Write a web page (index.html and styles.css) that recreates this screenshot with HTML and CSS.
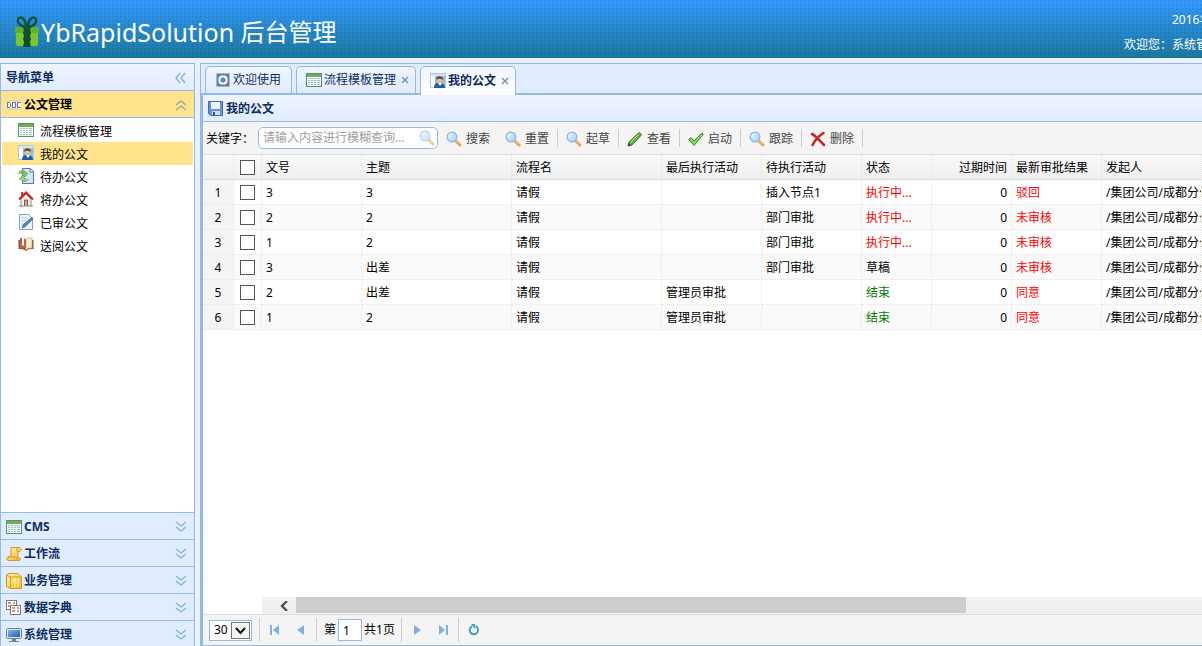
FILE: index.html
```html
<!DOCTYPE html>
<html lang="zh-CN">
<head>
<meta charset="utf-8">
<title>YbRapidSolution 后台管理</title>
<link rel="stylesheet" href="styles.css">
</head>
<body>
<svg class="defs" aria-hidden="true">
  <defs>
    <linearGradient id="lens" x1="0" y1="0" x2="1" y2="1"><stop offset="0" stop-color="#e8f6ff"/><stop offset="1" stop-color="#9fd0fa"/></linearGradient>
    <linearGradient id="gold" x1="0" y1="0" x2="1" y2="1"><stop offset="0" stop-color="#fff3a8"/><stop offset="1" stop-color="#f3b928"/></linearGradient>
    <linearGradient id="screen" x1="0" y1="0" x2="1" y2="1"><stop offset="0" stop-color="#7fb4ee"/><stop offset="1" stop-color="#2560b4"/></linearGradient>
  </defs>
  <symbol id="i-gift" viewBox="0 0 26 32">
    <rect x="2" y="12" width="22" height="18" rx="2" fill="#7cc62c"/>
    <rect x="1" y="11" width="24" height="6" rx="1" fill="#5fae2c"/>
    <path d="M9 11h8l-1 3 1 3-1 3 1 3-1 3 1 5H9l1-5-1-3 1-3-1-3 1-3z" fill="#0f4d34"/>
    <path d="M12 11C5 10 2 5 5 2c3-2 7 2 7 9zM14 11c7-1 10-6 7-9-3-2-7 2-7 9z" fill="none" stroke="#124f3c" stroke-width="2.4"/>
  </symbol>
  <symbol id="i-grid" viewBox="0 0 16 16">
    <rect x=".5" y="1.500" width="15" height="13" fill="#fff" stroke="#5f8f72"/>
    <path d="M1 2h14v3H1z" fill="#6fae58"/>
    <path d="M2 6h2v1H2zM5 6h2v1H5zM8 6h2v1H8zM11 6h3v1h-3zM2 8h2v1H2zM5 8h2v1H5zM8 8h2v1H8zM11 8h3v1h-3zM2 10h2v1H2zM5 10h2v1H5zM8 10h2v1H8zM11 10h3v1h-3zM2 12h2v1H2zM5 12h2v1H5zM8 12h2v1H8zM11 12h3v1h-3z" fill="#8fbfc8"/>
  </symbol>
  <symbol id="i-user" viewBox="0 0 16 16">
    <rect x=".5" y=".5" width="15" height="14" fill="#fff" stroke="#b4c8de"/>
    <path d="M1 1h14v2H1z" fill="#d5e5f6"/><path d="M5 3h10v11H5z" fill="#8bbbe8"/>
    <path d="M4 15c0-4 2-5 5-5s6 1 6 5z" fill="#245ba4"/><path d="M8 10l2 3 2-3z" fill="#fff"/>
    <circle cx="9.500" cy="7" r="3" fill="#eabc88"/><path d="M6 7c0-5 7-5 7 0-2-1-4-2-7 0z" fill="#6b4325"/>
  </symbol>
  <symbol id="i-pending" viewBox="0 0 16 16">
    <path d="M4.500 .5h8l3 3v12h-11z" fill="#d2e5fb" stroke="#4e79bb"/><path d="M12 1v3h3" fill="#fff" stroke="#4e79bb"/>
    <path d="M1 4c4-3 7-1 7 1h2l-3 4-4-4h2C5 4 3 4 1 6z" fill="#8cc060" stroke="#5f9440" stroke-width=".6"/>
    <path d="M10 12c-4 3-7 1-7-1H1l3-3 4 3H6c1 2 2 2 4 0z" fill="#a2cf72" stroke="#5f9440" stroke-width=".6"/>
  </symbol>
  <symbol id="i-home" viewBox="0 0 16 16">
    <path d="M3 8v7h10V8L8 3z" fill="#f5f2ee" stroke="#9a8e84"/><path d="M3 1h2v4H3z" fill="#d03c34"/>
    <path d="M1 8.500L8 1.500l7 7" fill="none" stroke="#c72c29" stroke-width="2.200"/><path d="M6.500 15V9h3v6" fill="#a4b6c6" stroke="#b24736"/>
    <path d="M1 15h3M12 15h3" stroke="#5ba13d"/>
  </symbol>
  <symbol id="i-edit" viewBox="0 0 16 16">
    <path d="M1.500 .5h9l4 4v11h-13z" fill="#edf5fd" stroke="#7c9fc4"/><path d="M3 4h6M3 7h6M3 10h4" stroke="#b7cce2"/>
    <path d="M14 3l1 2-8 8-3 1 1-3z" fill="#6186a8" stroke="#365877" stroke-width=".6"/>
  </symbol>
  <symbol id="i-book" viewBox="0 0 16 16">
    <path d="M.5 3v9c3 0 5 0 7.500 2 2.500-2 4.500-2 7.500-2V3H14v8H2V3z" fill="#8a5630"/>
    <path d="M2 1c3 0 5 0 6 2v10c-2-2-4-2-6-2z" fill="#c9574a"/><path d="M8 3c1-2 3-2 6-2v10c-2 0-4 0-6 2z" fill="#f7ead1" stroke="#b89b6e" stroke-width=".6"/>
    <path d="M4 1h2v8L5 8 4 9z" fill="#fff"/>
  </symbol>
  <symbol id="i-doc" viewBox="0 0 16 16">
    <path d="M1 3.500h13M1 12.500h13" stroke="#c3cff0"/>
    <g fill="#fff" stroke="#5872bd"><path d="M1.500 5.500h2l1 1v3l-1 1h-2zM6.500 5.500h3v5h-3zM14.500 5.500h-3v5h3"/></g>
  </symbol>
  <symbol id="i-scroll" viewBox="0 0 16 16">
    <path d="M5 1.500h8c3 0 3 4 0 4h-1v6c3 0 3 3 1 3H3c-3 0-3-3-1-3.500 2-.5 3-1 3-3z" fill="url(#gold)" stroke="#cf9a2e"/>
    <path d="M12 5.500c-2 0-2-3 0-3M2 11h8c2 1 1 3 0 3.500" fill="none" stroke="#cf9a2e"/>
  </symbol>
  <symbol id="i-box" viewBox="0 0 16 16">
    <path d="M.5 2L2 .5h10L15.500 4v11.500h-11l-4-2z" fill="url(#gold)" stroke="#d09a1c"/><path d="M1 2l3 2h11M4.500 4v11" fill="none" stroke="#d09a1c"/><path d="M9 5v9M12 5v9" stroke="#fff3ac"/>
  </symbol>
  <symbol id="i-dict" viewBox="0 0 16 16">
    <rect x=".5" y=".5" width="10" height="9" fill="#fff" stroke="#8c7474"/><rect x="4.500" y="5.500" width="10" height="9" fill="#fff" stroke="#8c7474"/>
    <path d="M2 3h3M7 3h2M2 6h2M6 8h3M11 8h2M6 11h3M11 11h2" stroke="#b87272" stroke-width="1.400"/>
  </symbol>
  <symbol id="i-monitor" viewBox="0 0 16 16">
    <rect x=".5" y="1.500" width="15" height="10" rx="1" fill="#dfe5ed" stroke="#6b7f97"/><path d="M2 3h12v7H2z" fill="url(#screen)"/>
    <path d="M6 12h4v2h3v1H3v-1h3z" fill="#71849b"/>
  </symbol>
  <symbol id="i-gear" viewBox="0 0 16 16">
    <rect x="2.500" y="2.500" width="11" height="11" fill="#f2f7fc" stroke="#5f7fa6" stroke-width="2"/>
    <path d="M3 3h3L3 6zM13 3v3l-3-3zM3 13v-3l3 3zM13 13h-3l3-3z" fill="#5f7fa6"/>
    <circle cx="8" cy="8" r="2" fill="#6d93c4" stroke="#43648f"/>
  </symbol>
  <symbol id="i-save" viewBox="0 0 16 16">
    <path d="M.5 .5h14v14h-12l-2-2z" fill="#6a90dc" stroke="#4469b6"/><path d="M3 1h9v7H3z" fill="#edf4ff"/><path d="M4 10h8v4H4z" fill="#d3dbe8"/><path d="M5 11h2v3H5z" fill="#33528f"/>
  </symbol>
  <symbol id="i-search" viewBox="0 0 16 16">
    <path d="M9.500 9.500l4.500 4.500" stroke="#e0a050" stroke-width="3" stroke-linecap="round"/><path d="M10 9.500l4 4" stroke="#ffd28c"/>
    <circle cx="6" cy="6" r="4.800" fill="url(#lens)" stroke="#8fb8e6" stroke-width="1.400"/><path d="M3 6c0-2 1-3 3-3" fill="none" stroke="#fff"/>
  </symbol>
  <symbol id="i-pencil" viewBox="0 0 16 16">
    <path d="M1 15l1-4L11.500 2c1-1 3.500 1 2.500 2.500L5 14z" fill="#63b748" stroke="#317923"/><path d="M3.500 11.500l8-8" stroke="#b6e696"/><path d="M1 15l1-3 2 2z" fill="#333"/>
  </symbol>
  <symbol id="i-check" viewBox="0 0 16 16"><path d="M.7 8.500L3 6.500l3 3.500L14 2l1.300 1.500L6 14.500z" fill="#80d95d" stroke="#329228"/></symbol>
  <symbol id="i-delete" viewBox="0 0 16 16"><path d="M2 3C6 5 10 10 14 14M13.500 2C9 5 5 9 2.500 14" fill="none" stroke="#c22a2a" stroke-width="2.600" stroke-linecap="round"/></symbol>
  <symbol id="i-up" viewBox="0 0 12 12"><path d="M1 6l5-4 5 4M1 11l5-4 5 4" fill="none" stroke="currentColor" stroke-width="1.300"/></symbol>
  <symbol id="i-down" viewBox="0 0 12 12"><path d="M1 1l5 4 5-4M1 6l5 4 5-4" fill="none" stroke="currentColor" stroke-width="1.300"/></symbol>
  <symbol id="i-left" viewBox="0 0 12 12"><path d="M5 1L1 6l4 5M10 1L6 6l4 5" fill="none" stroke="currentColor" stroke-width="1.300"/></symbol>
  <symbol id="i-close" viewBox="0 0 8 8"><path d="M1 1l6 6M7 1L1 7" stroke="currentColor" stroke-width="1.400"/></symbol>
  <symbol id="i-first" viewBox="0 0 12 12"><path d="M1 1h2v10H1zM10 1v10L4 6z" fill="currentColor"/></symbol>
  <symbol id="i-prev" viewBox="0 0 12 12"><path d="M9 1v10L2 6z" fill="currentColor"/></symbol>
  <symbol id="i-next" viewBox="0 0 12 12"><path d="M3 1v10l7-5z" fill="currentColor"/></symbol>
  <symbol id="i-last" viewBox="0 0 12 12"><path d="M9 1h2v10H9zM2 1v10l6-5z" fill="currentColor"/></symbol>
  <symbol id="i-refresh" viewBox="0 0 12 12"><path d="M7.500 2.200A4.200 4.200 0 1 1 4 2.300" fill="none" stroke="#479fc6" stroke-width="2"/><path d="M3 0h4v5z" fill="#479fc6"/></symbol>
</svg>

<header class="banner">
  <h1 class="brand"><svg class="brand-logo"><use href="#i-gift"/></svg>YbRapidSolution&nbsp;<span class="brand-sub">后台管理</span></h1>
  <div class="session">
    <span class="session-date">2016年</span>
    <span>欢迎您<span class="colon">：</span>系统管理员</span>
  </div>
</header>

<div class="workspace">
  <nav class="sidebar" aria-label="导航菜单">
    <div class="side-title">导航菜单<button class="fold" aria-label="折叠"><svg class="tool"><use href="#i-left"/></svg></button></div>
    <button class="group group-open"><svg class="icon"><use href="#i-doc"/></svg>公文管理<svg class="tool"><use href="#i-up"/></svg></button>
    <ul class="tree">
      <li><a class="node" href="#"><svg class="icon"><use href="#i-grid"/></svg><span>流程模板管理</span></a></li>
      <li><a class="node node-current" href="#"><svg class="icon"><use href="#i-user"/></svg><span>我的公文</span></a></li>
      <li><a class="node" href="#"><svg class="icon"><use href="#i-pending"/></svg><span>待办公文</span></a></li>
      <li><a class="node" href="#"><svg class="icon"><use href="#i-home"/></svg><span>将办公文</span></a></li>
      <li><a class="node" href="#"><svg class="icon"><use href="#i-edit"/></svg><span>已审公文</span></a></li>
      <li><a class="node" href="#"><svg class="icon"><use href="#i-book"/></svg><span>送阅公文</span></a></li>
    </ul>
    <button class="group"><svg class="icon"><use href="#i-grid"/></svg>CMS<svg class="tool"><use href="#i-down"/></svg></button>
    <button class="group"><svg class="icon"><use href="#i-scroll"/></svg>工作流<svg class="tool"><use href="#i-down"/></svg></button>
    <button class="group"><svg class="icon"><use href="#i-box"/></svg>业务管理<svg class="tool"><use href="#i-down"/></svg></button>
    <button class="group"><svg class="icon"><use href="#i-dict"/></svg>数据字典<svg class="tool"><use href="#i-down"/></svg></button>
    <button class="group"><svg class="icon"><use href="#i-monitor"/></svg>系统管理<svg class="tool"><use href="#i-down"/></svg></button>
  </nav>

  <main class="content">
    <div class="tabs" role="tablist">
      <button class="tab" role="tab"><svg class="icon"><use href="#i-gear"/></svg>欢迎使用</button>
      <button class="tab tab-closable" role="tab"><svg class="icon"><use href="#i-grid"/></svg>流程模板管理<svg class="close"><use href="#i-close"/></svg></button>
      <button class="tab tab-closable tab-current" role="tab" aria-selected="true"><svg class="icon"><use href="#i-user"/></svg>我的公文<svg class="close"><use href="#i-close"/></svg></button>
    </div>
    <section class="panel">
      <h2 class="panel-title"><svg class="icon"><use href="#i-save"/></svg>我的公文</h2>
      <div class="toolbar">
        <label class="keyword" for="keyword">关键字<span class="colon">：</span></label>
        <div class="searchbox"><input id="keyword" class="search-input" type="text" placeholder="请输入内容进行模糊查询..."><svg class="icon faded"><use href="#i-search"/></svg></div>
        <button class="action"><svg class="icon"><use href="#i-search"/></svg>搜索</button>
        <button class="action"><svg class="icon"><use href="#i-search"/></svg>重置</button>
        <span class="sep"></span>
        <button class="action"><svg class="icon"><use href="#i-search"/></svg>起草</button>
        <span class="sep"></span>
        <button class="action"><svg class="icon"><use href="#i-pencil"/></svg>查看</button>
        <span class="sep"></span>
        <button class="action"><svg class="icon"><use href="#i-check"/></svg>启动</button>
        <span class="sep"></span>
        <button class="action"><svg class="icon"><use href="#i-search"/></svg>跟踪</button>
        <span class="sep"></span>
        <button class="action"><svg class="icon"><use href="#i-delete"/></svg>删除</button>
        <span class="sep"></span>
      </div>
      <div class="grid-body">
        <table class="grid">
          <colgroup><col class="c-num"><col class="c-check"><col class="c-md"><col class="c-lg"><col class="c-lg"><col class="c-md"><col class="c-md"><col class="c-state"><col class="c-time"><col class="c-result"><col></colgroup>
          <thead>
            <tr><th></th><th><input type="checkbox" class="check" aria-label="全选"></th><th>文号</th><th>主题</th><th>流程名</th><th>最后执行活动</th><th>待执行活动</th><th>状态</th><th class="num">过期时间</th><th>最新审批结果</th><th>发起人</th></tr>
          </thead>
          <tbody>
            <tr><td class="rownum">1</td><td><input type="checkbox" class="check" aria-label="选择第1行"></td><td>3</td><td>3</td><td>请假</td><td></td><td>插入节点1</td><td class="red">执行中...</td><td class="num">0</td><td class="red">驳回</td><td>/集团公司/成都分公司</td></tr>
            <tr><td class="rownum">2</td><td><input type="checkbox" class="check" aria-label="选择第2行"></td><td>2</td><td>2</td><td>请假</td><td></td><td>部门审批</td><td class="red">执行中...</td><td class="num">0</td><td class="red">未审核</td><td>/集团公司/成都分公司</td></tr>
            <tr><td class="rownum">3</td><td><input type="checkbox" class="check" aria-label="选择第3行"></td><td>1</td><td>2</td><td>请假</td><td></td><td>部门审批</td><td class="red">执行中...</td><td class="num">0</td><td class="red">未审核</td><td>/集团公司/成都分公司</td></tr>
            <tr><td class="rownum">4</td><td><input type="checkbox" class="check" aria-label="选择第4行"></td><td>3</td><td>出差</td><td>请假</td><td></td><td>部门审批</td><td>草稿</td><td class="num">0</td><td class="red">未审核</td><td>/集团公司/成都分公司</td></tr>
            <tr><td class="rownum">5</td><td><input type="checkbox" class="check" aria-label="选择第5行"></td><td>2</td><td>出差</td><td>请假</td><td>管理员审批</td><td></td><td class="green">结束</td><td class="num">0</td><td class="red">同意</td><td>/集团公司/成都分公司</td></tr>
            <tr><td class="rownum">6</td><td><input type="checkbox" class="check" aria-label="选择第6行"></td><td>1</td><td>2</td><td>请假</td><td>管理员审批</td><td></td><td class="green">结束</td><td class="num">0</td><td class="red">同意</td><td>/集团公司/成都分公司</td></tr>
          </tbody>
        </table>
      </div>
      <div class="scroll">
        <button class="scroll-back" aria-label="向左滚动"><svg class="chevron" viewBox="0 0 10 10"><path d="M8 0L3 5l5 5" fill="none" stroke="#505050" stroke-width="2.400"/></svg></button>
        <div class="scroll-track"><div class="scroll-thumb"></div></div>
      </div>
      <div class="pager">
        <div class="size"><select class="size-select" aria-label="每页条数"><option>30</option></select><svg class="size-arrow" viewBox="0 0 19 17"><rect x=".5" y=".5" width="18" height="16" fill="#f4f4f4" stroke="#777"/><path d="M5 6l4.500 5L14 6" fill="none" stroke="#111" stroke-width="2"/></svg></div>
        <span class="sep"></span>
        <button class="page-btn" aria-label="首页"><svg class="tool"><use href="#i-first"/></svg></button>
        <button class="page-btn" aria-label="上一页"><svg class="tool"><use href="#i-prev"/></svg></button>
        <span class="sep"></span>
        <label class="page-label" for="page">第</label><input id="page" class="page-input" type="text" value="1"><span class="page-total">共1页</span>
        <span class="sep"></span>
        <button class="page-btn" aria-label="下一页"><svg class="tool"><use href="#i-next"/></svg></button>
        <button class="page-btn" aria-label="末页"><svg class="tool"><use href="#i-last"/></svg></button>
        <span class="sep"></span>
        <button class="page-btn" aria-label="刷新"><svg class="tool"><use href="#i-refresh"/></svg></button>
      </div>
    </section>
  </main>
</div>
</body>
</html>
```
FILE: styles.css
```css
* { box-sizing: border-box; }

body {
  margin: 0;
  height: 100vh;
  display: flex;
  flex-direction: column;
  overflow: hidden;
  background: #e9f1ff;
  color: #000;
  font: 12px/16px "Noto Sans", "Noto Sans CJK SC", sans-serif;
}

button, input, select { font: inherit; color: inherit; }
button { background: none; border: 0; padding: 0; white-space: nowrap; }

/* Shared symbols and gradients; takes no room on the page */
.defs { position: absolute; width: 0; height: 0; }
.icon { width: 16px; height: 16px; flex: none; }
.tool { width: 12px; height: 12px; flex: none; color: #7fb0e4; }
.colon { font-family: "Noto Sans CJK TC", sans-serif; }

/* Banner */
.banner {
  flex: none;
  height: 58px;
  display: flex;
  justify-content: space-between;
  color: #fff;
  background:
    radial-gradient(circle at 1px 1px, rgba(0, 50, 110, .1) 1px, transparent 1px) 0 0 / 4px 4px,
    linear-gradient(#3399ff, #1b789c);
}
.brand {
  margin: 0;
  padding: 6px 0 0 14px;
  display: flex;
  align-items: center;
  font-size: 25px;
  font-weight: 400;
  line-height: 32px;
  white-space: nowrap;
}
.brand-logo { width: 26px; height: 32px; margin-right: 1px; }
.brand-sub { font-size: 24px; }
.session {
  width: 78px;
  flex: none;
  padding-top: 8px;
  display: flex;
  flex-direction: column;
  line-height: 24px;
  white-space: nowrap;
}
.session-date { padding-left: 48px; }

.workspace {
  flex: 1;
  min-height: 0;
  display: flex;
  gap: 5px;
  padding-top: 5px;
}

/* Sidebar */
.sidebar {
  width: 195px;
  flex: none;
  display: flex;
  flex-direction: column;
  background: #fff;
  border: 1px solid #95b8e7;
  border-bottom: 0;
}
.side-title, .group {
  flex: none;
  height: 27px;
  display: flex;
  align-items: center;
  padding: 2px 7px 0 5px;
  color: #0e2d5f;
  font-weight: 700;
  border-bottom: 1px solid #95b8e7;
}
.side-title { background: linear-gradient(#eff5ff, #e0ecff); }
.fold { display: flex; margin-left: auto; }
.group { gap: 2px; background: #e0ecff; }
.group:last-child { height: 25px; border-bottom: 0; }
.group .tool { margin-left: auto; }
.group-open { background: #ffe48d; color: #000; }
.group-open .tool { color: #8caaa5; }
.tree {
  flex: 1;
  margin: 0;
  padding: 1px 1px 0;
  list-style: none;
  border-bottom: 1px solid #95b8e7;
}
.node {
  height: 23px;
  display: flex;
  align-items: center;
  gap: 6px;
  padding: 2px 0 0 16px;
  color: #000;
  text-decoration: none;
}
.node .icon { margin-bottom: 4px; }
.node-current { background: #ffe48d; }

/* Tabs */
.content {
  flex: 1;
  min-width: 0;
  display: flex;
  flex-direction: column;
  border: 1px solid #95b8e7;
  border-right: 0;
}
.tabs {
  flex: none;
  height: 31px;
  display: flex;
  align-items: flex-end;
  gap: 4px;
  padding: 2px 4px 0;
  background: #e0ecff;
  border-bottom: 2px solid #95b8e7;
}
.tab {
  height: 27px;
  display: flex;
  align-items: center;
  gap: 2px;
  padding: 0 10px 0 9px;
  color: #0e2d5f;
  background: linear-gradient(#eff5ff, #e0ecff);
  border: 1px solid #95b8e7;
  border-bottom: 0;
  border-radius: 5px 5px 0 0;
}
.tab-closable { padding: 0 6px 0 9px; }
.tab-current {
  height: 29px;
  margin-bottom: -2px;
  font-weight: 700;
  background: linear-gradient(#eff5ff, #fff);
}
.close { width: 8px; height: 8px; margin-left: 3px; color: #7890ae; }

/* Panel */
.panel {
  flex: 1;
  min-height: 0;
  display: flex;
  flex-direction: column;
  background: #fff;
  border-left: 2px solid #95b8e7;
}
.panel-title {
  flex: none;
  height: 27px;
  margin: 0;
  padding: 1px 5px 0;
  display: flex;
  align-items: center;
  gap: 2px;
  color: #0e2d5f;
  font-size: 12px;
  background: linear-gradient(#eff5ff, #e0ecff);
  border-bottom: 1px solid #95b8e7;
}
.toolbar {
  flex: none;
  height: 33px;
  display: flex;
  align-items: center;
  gap: 1px;
  padding-left: 3px;
  background: #f4f4f4;
  border-bottom: 1px solid #ddd;
}
.keyword { width: 51px; white-space: nowrap; }
.searchbox {
  width: 180px;
  height: 22px;
  display: flex;
  align-items: center;
  padding: 0 2px 0 4px;
  background: #fff;
  border: 1px solid #95b8e7;
  border-radius: 5px;
}
.search-input {
  flex: 1;
  min-width: 0;
  padding: 0;
  background: none;
  border: 0;
  outline: 0;
}
.search-input::placeholder { color: #a0a0a0; }
.faded { opacity: .6; }
.action {
  display: flex;
  align-items: center;
  gap: 4px;
  padding: 1px 7px 0;
  color: #444;
}
.sep {
  width: 1px;
  height: 18px;
  background: #ccc;
}

/* Data grid */
.grid-body { flex: 1; min-height: 0; overflow: hidden; }
.grid {
  width: 100%;
  table-layout: fixed;
  border-collapse: separate;
  border-spacing: 0;
}
.c-num { width: 31px; }
.c-check { width: 28px; }
.c-md { width: 100px; }
.c-lg { width: 150px; }
.c-state { width: 70px; }
.c-time { width: 80px; }
.c-result { width: 90px; }
.grid th, .grid td {
  height: 25px;
  padding: 2px 4px 0;
  overflow: hidden;
  white-space: nowrap;
  text-align: left;
  font-weight: 400;
  border-right: 1px dotted #e4e4e4;
  border-bottom: 1px dotted #e4e4e4;
}
.grid th {
  background: linear-gradient(#f9f9f9, #efefef);
  border-bottom: 1px solid #ddd;
}
.grid tbody tr:nth-child(even) { background: #fafafa; }
.grid .rownum { background: #f4f4f4; text-align: center; }
.grid .num { text-align: right; }
.grid .red { color: #f00; }
.grid .green { color: #008000; }
.check {
  appearance: none;
  display: block;
  width: 15px;
  height: 15px;
  margin: 0 0 2px 2px;
  background: #fff;
  border: 1px solid #555;
}

/* Horizontal scroll bar */
.scroll {
  flex: none;
  height: 17px;
  display: flex;
  padding-left: 59px;
}
.scroll-back {
  width: 34px;
  display: flex;
  align-items: center;
  justify-content: flex-end;
  padding-right: 7px;
  background: #f0f0f0;
}
.chevron { width: 10px; height: 10px; }
.scroll-track { flex: 1; background: #f0f0f0; }
.scroll-thumb { width: 74%; height: 16px; background: #cdcdcd; }

/* Pager */
.pager {
  flex: none;
  height: 31px;
  display: flex;
  align-items: center;
  padding-left: 6px;
  background: #f4f4f4;
  border-top: 1px solid #ddd;
}
.pager .sep { height: 24px; margin: 0 2px; }
.size { position: relative; width: 43px; height: 21px; margin-right: 5px; }
.size-select {
  appearance: none;
  width: 100%;
  height: 100%;
  padding: 0 4px;
  background: #fff;
  border: 1px solid #95b8e7;
  border-radius: 0;
}
.size-arrow {
  position: absolute;
  top: 2px;
  right: 2px;
  width: 19px;
  height: 17px;
  pointer-events: none;
}
.page-btn {
  width: 26px;
  height: 26px;
  display: flex;
  align-items: center;
  justify-content: center;
}
.page-label { padding: 0 2px 0 5px; }
.page-input {
  width: 24px;
  height: 22px;
  padding: 0 4px;
  background: #fff;
  border: 1px solid #95b8e7;
}
.page-total { padding: 0 4px 0 2px; }
```
